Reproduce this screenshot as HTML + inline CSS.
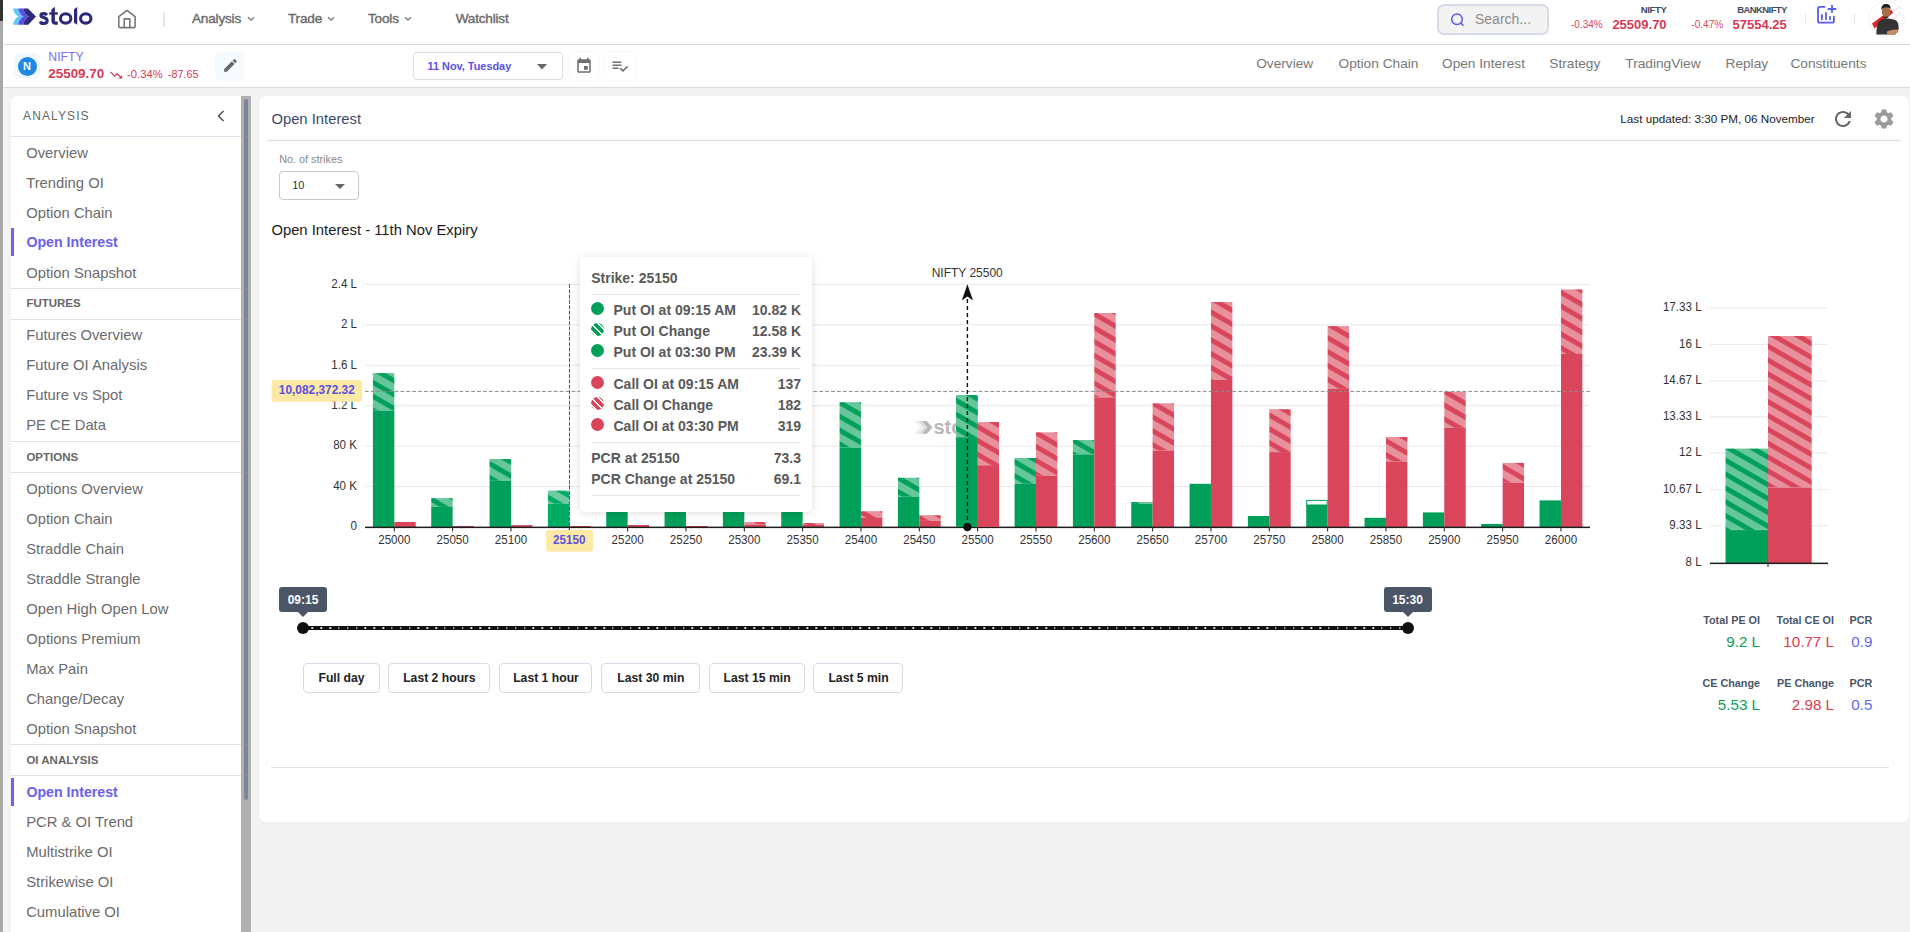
<!DOCTYPE html>
<html><head><meta charset="utf-8"><style>
html,body{margin:0;padding:0;}
body{width:1910px;height:932px;overflow:hidden;position:relative;background:#f3f3f3;font-family:"Liberation Sans",sans-serif;}
.t{position:absolute;white-space:nowrap;}
.r{position:absolute;}
</style></head><body>
<div class="r" style="left:0px;top:0px;width:3px;height:932px;background:#a9a9a9"></div>
<div class="r" style="left:0px;top:0px;width:3px;height:21px;background:#333"></div>
<div class="r" style="left:3px;top:0px;width:1907px;height:44px;background:#fff"></div>
<div class="r" style="left:3px;top:44px;width:1907px;height:1px;background:#dcdcdc"></div>
<div class="r" style="left:3px;top:45px;width:1907px;height:42px;background:#fff"></div>
<div class="r" style="left:3px;top:87px;width:1907px;height:1px;background:#dcdcdc"></div>
<svg class="r" style="left:0;top:0" width="40" height="32" viewBox="0 0 40 32">
<path d="M13 8.6L18.1 8.6Q19.3 14.6 23.6 16.6Q19.3 18.6 18.1 24.8L13 24.8Q14.2 18.6 18.5 16.6Q14.2 14.6 13 8.6Z" fill="#5ec8f8"/>
<path d="M18.1 8.6L23.4 8.6Q24.6 14.6 28.9 16.6Q24.6 18.6 23.4 24.8L18.1 24.8Q19.3 18.6 23.6 16.6Q19.3 14.6 18.1 8.6Z" fill="#5a50e8"/>
<path d="M23.4 8.6L27.9 8.6L36 16.6L28.3 24.8L23.4 24.8Q24.6 18.6 28.9 16.6Q24.6 14.6 23.4 8.6Z" fill="#2d2b7a"/>
</svg>
<svg class="r" style="left:0;top:0" width="100" height="32" viewBox="0 0 100 32">
<g fill="#2b2a78">
<path d="M51.4 9.3L54.9 7.1V20.4Q54.9 21.6 56.1 21.6H57.8V24.7H55.6Q51.4 24.7 51.4 20.5Z"/>
<rect x="49.2" y="12.3" width="8.6" height="2.3"/>
<path d="M74 9.3L77.2 7.1V24.7L74 22.8Z"/>
</g>
<g fill="none" stroke="#2b2a78" stroke-width="3.1">
<ellipse cx="65.65" cy="18.45" rx="5.2" ry="4.7"/>
<ellipse cx="85.75" cy="18.45" rx="5.2" ry="4.7"/>
<path d="M46.9 15.1C46.2 13.9 45 13.6 43.6 13.6C41.9 13.6 40.9 14.3 40.9 15.4C40.9 16.8 42.6 17.2 44.3 17.7C46.3 18.3 47.2 19.2 47.2 20.8C47.2 22.6 45.6 23.5 43.6 23.5C41.8 23.5 40.6 22.8 39.9 21.6"/>
</g></svg>
<svg class="r" style="left:117px;top:9px" width="20" height="20" viewBox="0 0 20 20" fill="none" stroke="#777" stroke-width="1.6" stroke-linejoin="round">
<path d="M1.8 7.6L10 1.4L18.1 7.6V17.6Q18.1 18.6 17.1 18.6H2.8Q1.8 18.6 1.8 17.6Z"/><path d="M7.2 18.6V9.9H12.8V18.6"/></svg>
<div class="r" style="left:163px;top:12px;width:2px;height:15px;background:#e3e5f2"></div>
<div class="t" style="left:192.00px;top:11.78px;font-size:13.6px;line-height:13.6px;color:#6b6b6b;font-weight:400;letter-spacing:-0.2px;-webkit-text-stroke:0.4px #6b6b6b;">Analysis</div>
<svg class="r" style="left:247px;top:16px" width="8" height="6" viewBox="0 0 8 6"><path d="M1 1.2L4 4.2L7 1.2" fill="none" stroke="#777" stroke-width="1.3"/></svg>
<div class="t" style="left:288.00px;top:11.78px;font-size:13.6px;line-height:13.6px;color:#6b6b6b;font-weight:400;letter-spacing:-0.2px;-webkit-text-stroke:0.4px #6b6b6b;">Trade</div>
<svg class="r" style="left:327px;top:16px" width="8" height="6" viewBox="0 0 8 6"><path d="M1 1.2L4 4.2L7 1.2" fill="none" stroke="#777" stroke-width="1.3"/></svg>
<div class="t" style="left:368.00px;top:11.78px;font-size:13.6px;line-height:13.6px;color:#6b6b6b;font-weight:400;letter-spacing:-0.2px;-webkit-text-stroke:0.4px #6b6b6b;">Tools</div>
<svg class="r" style="left:404px;top:16px" width="8" height="6" viewBox="0 0 8 6"><path d="M1 1.2L4 4.2L7 1.2" fill="none" stroke="#777" stroke-width="1.3"/></svg>
<div class="t" style="left:455.70px;top:11.78px;font-size:13.6px;line-height:13.6px;color:#6b6b6b;font-weight:400;letter-spacing:-0.2px;-webkit-text-stroke:0.4px #6b6b6b;">Watchlist</div>
<div class="r" style="left:1437px;top:4px;width:112px;height:31px;background:#f3f3f4;border:2px solid #d6dbe8;border-radius:7px;box-sizing:border-box"></div>
<svg class="r" style="left:1450px;top:12px" width="16" height="16" viewBox="0 0 16 16" fill="none" stroke="#5a5cf0" stroke-width="1.5"><circle cx="7" cy="7.2" r="5.3"/><path d="M10.9 11.1L13.6 13.8"/></svg>
<div class="t" style="left:1475.00px;top:11.95px;font-size:14px;line-height:14px;color:#8a8a8a;font-weight:400;">Search...</div>
<div class="t" style="right:243.40px;text-align:right;top:4.76px;font-size:9.5px;line-height:9.5px;color:#3d4a5c;font-weight:700;letter-spacing:-0.3px;">NIFTY</div>
<div class="t" style="right:307.30px;text-align:right;top:20.13px;font-size:10px;line-height:10px;color:#d9455f;font-weight:400;">-0.34%</div>
<div class="t" style="right:243.40px;text-align:right;top:17.69px;font-size:13px;line-height:13px;color:#d63a55;font-weight:700;">25509.70</div>
<div class="t" style="right:123.20px;text-align:right;top:4.76px;font-size:9.5px;line-height:9.5px;color:#3d4a5c;font-weight:700;letter-spacing:-0.6px;">BANKNIFTY</div>
<div class="t" style="right:186.90px;text-align:right;top:20.13px;font-size:10px;line-height:10px;color:#d9455f;font-weight:400;">-0.47%</div>
<div class="t" style="right:123.20px;text-align:right;top:17.69px;font-size:13px;line-height:13px;color:#d63a55;font-weight:700;">57554.25</div>
<div class="r" style="left:1805px;top:14px;width:1px;height:10px;background:#e6e6ee"></div>
<svg class="r" style="left:1815px;top:3px" width="24" height="24" viewBox="0 0 24 24" fill="none" stroke="#5a5cf0" stroke-width="1.8" stroke-linecap="round"><path d="M9.5 3.9H4.8Q3 3.9 3 5.7V17.9Q3 19.7 4.8 19.7H17.1Q18.9 19.7 18.9 17.9V13.6"/><path d="M6.9 12V16.3M11 9.9V16.3M14.9 13.8V16.3"/><path d="M17 2.6V9.2M13.5 6H20.6"/></svg>
<div class="r" style="left:1854px;top:14px;width:1px;height:10px;background:#e6e6ee"></div>
<svg class="r" style="left:1865px;top:0px" width="45" height="40" viewBox="0 0 45 40">
<circle cx="21.5" cy="19" r="17.5" fill="#fff" stroke="#f1f1f1" stroke-width="1"/>
<path d="M24 13L35.5 7M28 19L36 12.5" stroke="#f4c4c4" stroke-width="0.8" fill="none"/>
<path d="M7 23.5L26 9.5L28 12.8L9.5 28.5Z" fill="#e0262b"/>
<path d="M11.5 34.5C11.5 27 12 22.5 15 20.5C17 19 19.5 18.5 21.5 18.5C24 18.5 28 19 31 20.5C33.5 22 34 27 33.5 30L30 34.5Z" fill="#333"/>
<path d="M22 31.5C25 30 29.5 29.5 33 29.5L33 32.5L28 34.5L22 34.5Z" fill="#c98d62"/>
<ellipse cx="21" cy="11.8" rx="4.2" ry="5.6" fill="#a8704a"/>
<path d="M16.5 10C16 5 19 4 21 4C24 4 26 5.5 25.5 9.5L24.5 8C22 7 19.5 7 17.5 8.5Z" fill="#1e1e1e"/>
<path d="M18.5 16C19.5 17 22.5 17 23.5 16L23 17.5C22 18.2 20 18.2 19 17.5Z" fill="#2a2a2a"/>
</svg>
<div class="r" style="left:14px;top:53px;width:26px;height:26px;background:#f3f8fe;border-radius:5px"></div>
<div class="r" style="left:17.5px;top:56.5px;width:19px;height:19px;background:#1e88e5;border-radius:50%"></div>
<div class="t" style="left:-273.00px;width:600px;text-align:center;top:60.99px;font-size:11px;line-height:11px;color:#fff;font-weight:700;">N</div>
<div class="t" style="left:48.30px;top:50.59px;font-size:12.3px;line-height:12.3px;color:#7b6ef0;font-weight:400;">NIFTY</div>
<div class="t" style="left:48.30px;top:67.25px;font-size:13.4px;line-height:13.4px;color:#d63a55;font-weight:700;">25509.70</div>
<svg class="r" style="left:108.8px;top:67.8px" width="14.4" height="14.4" viewBox="0 0 24 24"><path fill="#d63a55" d="M16 18l2.29-2.29-4.88-4.88-4 4L2 7.41 3.41 6l6 6 4-4 6.3 6.29L22 12v6z"/></svg>
<div class="t" style="left:127.00px;top:69.03px;font-size:11.3px;line-height:11.3px;color:#d63a55;font-weight:400;">-0.34%</div>
<div class="t" style="left:167.90px;top:69.46px;font-size:10.8px;line-height:10.8px;color:#d63a55;font-weight:400;">-87.65</div>
<div class="r" style="left:216px;top:53px;width:27px;height:27px;background:#f5faff;border-radius:5px;box-shadow:0 0 3px rgba(0,0,0,0.06)"></div>
<svg class="r" style="left:221.6px;top:57.4px" width="16.9" height="16.9" viewBox="0 0 24 24"><path fill="#666" d="M3 17.25V21h3.75L17.81 9.94l-3.75-3.75L3 17.25zM20.71 7.04c.39-.39.39-1.02 0-1.41l-2.34-2.34c-.39-.39-1.02-.39-1.41 0l-1.83 1.83 3.75 3.75 1.83-1.83z"/></svg>
<div class="r" style="left:413px;top:52px;width:150px;height:28px;border:1px solid #dddddd;border-radius:4px;box-sizing:border-box;background:#fff"></div>
<div class="t" style="left:427.50px;top:60.97px;font-size:10.9px;line-height:10.9px;color:#5b50e8;font-weight:700;">11 Nov, Tuesday</div>
<svg class="r" style="left:537px;top:63.5px" width="10" height="6" viewBox="0 0 10 6"><path d="M0 0H10L5 5.5Z" fill="#666"/></svg>
<div class="r" style="left:569px;top:52px;width:30px;height:28px;background:#fff;border-radius:5px;box-shadow:0 0 3px rgba(0,0,0,0.07)"></div>
<svg class="r" style="left:575px;top:56.6px" width="18" height="18" viewBox="0 0 24 24"><path fill="#6e6e6e" d="M17 12h-5v5h5v-5zM16 1v2H8V1H6v2H5c-1.11 0-1.99.9-1.99 2L3 19c0 1.1.89 2 2 2h14c1.1 0 2-.9 2-2V5c0-1.1-.9-2-2-2h-1V1h-2zm3 18H5V8h14v11z"/></svg>
<div class="r" style="left:605px;top:52px;width:30px;height:28px;background:#fff;border-radius:5px;box-shadow:0 0 3px rgba(0,0,0,0.07)"></div>
<svg class="r" style="left:610.8px;top:56.6px" width="18" height="18" viewBox="0 0 24 24"><path fill="#6e6e6e" d="M14 10H2v2h12v-2zm0-4H2v2h12V6zM2 16h8v-2H2v2zm19.5-4.5L23 13l-6.99 7-4.51-4.5L13 14l3.01 3 5.49-5.5z"/></svg>
<div class="t" style="left:1256.20px;top:57.10px;font-size:13.7px;line-height:13.7px;color:#777;font-weight:400;">Overview</div>
<div class="t" style="left:1338.50px;top:57.10px;font-size:13.7px;line-height:13.7px;color:#777;font-weight:400;">Option Chain</div>
<div class="t" style="left:1442.00px;top:57.10px;font-size:13.7px;line-height:13.7px;color:#777;font-weight:400;">Open Interest</div>
<div class="t" style="left:1549.30px;top:57.10px;font-size:13.7px;line-height:13.7px;color:#777;font-weight:400;">Strategy</div>
<div class="t" style="left:1625.30px;top:57.10px;font-size:13.7px;line-height:13.7px;color:#777;font-weight:400;">TradingView</div>
<div class="t" style="left:1725.50px;top:57.10px;font-size:13.7px;line-height:13.7px;color:#777;font-weight:400;">Replay</div>
<div class="t" style="left:1790.40px;top:57.10px;font-size:13.7px;line-height:13.7px;color:#777;font-weight:400;">Constituents</div>
<div class="r" style="left:11px;top:96px;width:230px;height:836px;background:#fff;border-radius:6px 0 0 0"></div>
<div class="r" style="left:241px;top:96px;width:10px;height:836px;background:#b0b0b0"></div>
<div class="r" style="left:244px;top:99px;width:4px;height:701px;background:#7b8799;border-radius:2px"></div>
<div class="t" style="left:23.10px;top:109.84px;font-size:12px;line-height:12px;color:#666;font-weight:400;letter-spacing:1.1px;">ANALYSIS</div>
<svg class="r" style="left:216px;top:110px" width="10" height="12" viewBox="0 0 10 12"><path d="M7.5 1L2.5 6L7.5 11" fill="none" stroke="#555" stroke-width="1.6"/></svg>
<div class="r" style="left:11px;top:136px;width:230px;height:1px;background:#e0e2f0"></div>
<div class="t" style="left:26.20px;top:145.97px;font-size:14.8px;line-height:14.8px;color:#6b6b6b;font-weight:400;">Overview</div>
<div class="t" style="left:26.20px;top:175.97px;font-size:14.8px;line-height:14.8px;color:#6b6b6b;font-weight:400;">Trending OI</div>
<div class="t" style="left:26.20px;top:205.97px;font-size:14.8px;line-height:14.8px;color:#6b6b6b;font-weight:400;">Option Chain</div>
<div class="r" style="left:11px;top:228px;width:3px;height:28px;background:#6c63f0"></div>
<div class="t" style="left:26.40px;top:235.48px;font-size:14.2px;line-height:14.2px;color:#6b5ff0;font-weight:700;">Open Interest</div>
<div class="t" style="left:26.20px;top:265.97px;font-size:14.8px;line-height:14.8px;color:#6b6b6b;font-weight:400;">Option Snapshot</div>
<div class="r" style="left:11px;top:288px;width:230px;height:1px;background:#dfe2ec"></div>
<div class="t" style="left:26.40px;top:298.46px;font-size:11.5px;line-height:11.5px;color:#666;font-weight:700;">FUTURES</div>
<div class="r" style="left:11px;top:319px;width:230px;height:1px;background:#dfe2ec"></div>
<div class="t" style="left:26.20px;top:328.47px;font-size:14.8px;line-height:14.8px;color:#6b6b6b;font-weight:400;">Futures Overview</div>
<div class="t" style="left:26.20px;top:358.47px;font-size:14.8px;line-height:14.8px;color:#6b6b6b;font-weight:400;">Future OI Analysis</div>
<div class="t" style="left:26.20px;top:388.47px;font-size:14.8px;line-height:14.8px;color:#6b6b6b;font-weight:400;">Future vs Spot</div>
<div class="t" style="left:26.20px;top:418.47px;font-size:14.8px;line-height:14.8px;color:#6b6b6b;font-weight:400;">PE CE Data</div>
<div class="r" style="left:11px;top:441px;width:230px;height:1px;background:#dfe2ec"></div>
<div class="t" style="left:26.40px;top:451.76px;font-size:11.5px;line-height:11.5px;color:#666;font-weight:700;">OPTIONS</div>
<div class="r" style="left:11px;top:472px;width:230px;height:1px;background:#dfe2ec"></div>
<div class="t" style="left:26.20px;top:481.77px;font-size:14.8px;line-height:14.8px;color:#6b6b6b;font-weight:400;">Options Overview</div>
<div class="t" style="left:26.20px;top:511.77px;font-size:14.8px;line-height:14.8px;color:#6b6b6b;font-weight:400;">Option Chain</div>
<div class="t" style="left:26.20px;top:541.77px;font-size:14.8px;line-height:14.8px;color:#6b6b6b;font-weight:400;">Straddle Chain</div>
<div class="t" style="left:26.20px;top:571.77px;font-size:14.8px;line-height:14.8px;color:#6b6b6b;font-weight:400;">Straddle Strangle</div>
<div class="t" style="left:26.20px;top:601.77px;font-size:14.8px;line-height:14.8px;color:#6b6b6b;font-weight:400;">Open High Open Low</div>
<div class="t" style="left:26.20px;top:631.77px;font-size:14.8px;line-height:14.8px;color:#6b6b6b;font-weight:400;">Options Premium</div>
<div class="t" style="left:26.20px;top:661.77px;font-size:14.8px;line-height:14.8px;color:#6b6b6b;font-weight:400;">Max Pain</div>
<div class="t" style="left:26.20px;top:691.77px;font-size:14.8px;line-height:14.8px;color:#6b6b6b;font-weight:400;">Change/Decay</div>
<div class="t" style="left:26.20px;top:721.77px;font-size:14.8px;line-height:14.8px;color:#6b6b6b;font-weight:400;">Option Snapshot</div>
<div class="r" style="left:11px;top:744px;width:230px;height:1px;background:#dfe2ec"></div>
<div class="t" style="left:26.40px;top:754.86px;font-size:11.5px;line-height:11.5px;color:#666;font-weight:700;">OI ANALYSIS</div>
<div class="r" style="left:11px;top:775px;width:230px;height:1px;background:#dfe2ec"></div>
<div class="r" style="left:11px;top:778px;width:3px;height:28px;background:#6c63f0"></div>
<div class="t" style="left:26.40px;top:784.58px;font-size:14.2px;line-height:14.2px;color:#6b5ff0;font-weight:700;">Open Interest</div>
<div class="t" style="left:26.20px;top:815.07px;font-size:14.8px;line-height:14.8px;color:#6b6b6b;font-weight:400;">PCR & OI Trend</div>
<div class="t" style="left:26.20px;top:845.07px;font-size:14.8px;line-height:14.8px;color:#6b6b6b;font-weight:400;">Multistrike OI</div>
<div class="t" style="left:26.20px;top:875.07px;font-size:14.8px;line-height:14.8px;color:#6b6b6b;font-weight:400;">Strikewise OI</div>
<div class="t" style="left:26.20px;top:905.07px;font-size:14.8px;line-height:14.8px;color:#6b6b6b;font-weight:400;">Cumulative OI</div>
<div class="r" style="left:259px;top:96px;width:1650px;height:726px;background:#fff;border-radius:6px;box-shadow:0 0 2px rgba(0,0,0,0.05)"></div>
<div class="t" style="left:271.40px;top:112.07px;font-size:14.8px;line-height:14.8px;color:#3b4a68;font-weight:400;">Open Interest</div>
<div class="t" style="right:95.40px;text-align:right;top:113.09px;font-size:11.7px;line-height:11.7px;color:#222;font-weight:400;">Last updated: 3:30 PM, 06 November</div>
<svg class="r" style="left:1831px;top:107px" width="24" height="24" viewBox="0 0 24 24"><path fill="#666" d="M17.65 6.35C16.2 4.9 14.21 4 12 4c-4.42 0-7.99 3.58-7.99 8s3.57 8 7.99 8c3.73 0 6.84-2.55 7.73-6h-2.08c-.82 2.33-3.04 4-5.65 4-3.31 0-6-2.69-6-6s2.69-6 6-6c1.66 0 3.14.69 4.22 1.78L13 11h7V4l-2.35 2.35z"/></svg>
<svg class="r" style="left:1872px;top:107px" width="24" height="24" viewBox="0 0 24 24"><path fill="#9a9a9a" d="M19.14 12.94c.04-.3.06-.61.06-.94 0-.32-.02-.64-.07-.94l2.03-1.58a.49.49 0 0 0 .12-.61l-1.92-3.32a.488.488 0 0 0-.59-.22l-2.39.96c-.5-.38-1.03-.7-1.62-.94l-.36-2.54a.484.484 0 0 0-.48-.41h-3.84c-.24 0-.43.17-.47.41l-.36 2.54c-.59.24-1.13.57-1.62.94l-2.39-.96c-.22-.08-.47 0-.59.22L2.74 8.87c-.12.21-.08.47.12.61l2.03 1.58c-.05.3-.09.63-.09.94s.02.64.07.94l-2.03 1.58a.49.49 0 0 0-.12.61l1.92 3.32c.12.22.37.29.59.22l2.39-.96c.5.38 1.03.7 1.62.94l.36 2.54c.05.24.24.41.48.41h3.84c.24 0 .44-.17.47-.41l.36-2.54c.59-.24 1.13-.56 1.62-.94l2.39.96c.22.08.47 0 .59-.22l1.92-3.32c.12-.22.07-.47-.12-.61l-2.01-1.58zM12 15.6c-1.98 0-3.6-1.62-3.6-3.6s1.62-3.6 3.6-3.6 3.6 1.62 3.6 3.6-1.62 3.6-3.6 3.6z"/></svg>
<div class="r" style="left:267px;top:140px;width:1634px;height:1px;background:#dddddd"></div>
<div class="t" style="left:279.30px;top:154.06px;font-size:10.8px;line-height:10.8px;color:#888;font-weight:400;">No. of strikes</div>
<div class="r" style="left:279px;top:171px;width:80px;height:29px;border:1px solid #c8c8c8;border-radius:4px;box-sizing:border-box"></div>
<div class="t" style="left:292.20px;top:180.49px;font-size:11px;line-height:11px;color:#333;font-weight:400;">10</div>
<svg class="r" style="left:335px;top:184px" width="10" height="5" viewBox="0 0 10 5"><path d="M0 0H10L5 5Z" fill="#666"/></svg>
<div class="t" style="left:271.40px;top:223.17px;font-size:14.8px;line-height:14.8px;color:#1a1a1a;font-weight:400;">Open Interest - 11th Nov Expiry</div>
<svg class="r" style="left:0;top:0" width="1910" height="932" viewBox="0 0 1910 932">
<defs><pattern id="pg" patternUnits="userSpaceOnUse" width="12" height="12" patternTransform="rotate(30) translate(0,10.3)"><rect width="12" height="12" fill="#66c69c"/><rect y="0" width="12" height="4.9" fill="#00a05a"/></pattern><pattern id="pgh" patternUnits="userSpaceOnUse" width="12" height="12" patternTransform="rotate(30) translate(0,10.3)"><rect width="12" height="12" fill="#6fcca2"/><rect y="0" width="12" height="4.9" fill="#00ab63"/></pattern><pattern id="pr" patternUnits="userSpaceOnUse" width="12" height="12" patternTransform="rotate(30) translate(0,10.3)"><rect width="12" height="12" fill="#e8909c"/><rect y="0" width="12" height="4.9" fill="#d9465b"/></pattern><pattern id="pg2" patternUnits="userSpaceOnUse" width="12" height="12" patternTransform="rotate(30) translate(0,1.4)"><rect width="12" height="12" fill="#66c69c"/><rect y="0" width="12" height="4.9" fill="#00a05a"/></pattern><pattern id="pr2" patternUnits="userSpaceOnUse" width="12" height="12" patternTransform="rotate(30) translate(0,1.4)"><rect width="12" height="12" fill="#e8909c"/><rect y="0" width="12" height="4.9" fill="#d9465b"/></pattern></defs>
<rect x="365" y="486.07" width="1225" height="1" fill="#e8e8e8"/>
<rect x="365" y="445.64" width="1225" height="1" fill="#e8e8e8"/>
<rect x="365" y="405.21" width="1225" height="1" fill="#e8e8e8"/>
<rect x="365" y="364.78" width="1225" height="1" fill="#e8e8e8"/>
<rect x="365" y="324.35" width="1225" height="1" fill="#e8e8e8"/>
<rect x="365" y="283.92" width="1225" height="1" fill="#e8e8e8"/>
<text transform="translate(357.00,530.30) scale(1,1.09)" font-size="11.6" fill="#333" text-anchor="end" font-weight="400">0</text>
<text transform="translate(357.00,489.87) scale(1,1.09)" font-size="11.6" fill="#333" text-anchor="end" font-weight="400">40 K</text>
<text transform="translate(357.00,449.44) scale(1,1.09)" font-size="11.6" fill="#333" text-anchor="end" font-weight="400">80 K</text>
<text transform="translate(357.00,409.01) scale(1,1.09)" font-size="11.6" fill="#333" text-anchor="end" font-weight="400">1.2 L</text>
<text transform="translate(357.00,368.58) scale(1,1.09)" font-size="11.6" fill="#333" text-anchor="end" font-weight="400">1.6 L</text>
<text transform="translate(357.00,328.15) scale(1,1.09)" font-size="11.6" fill="#333" text-anchor="end" font-weight="400">2 L</text>
<text transform="translate(357.00,287.72) scale(1,1.09)" font-size="11.6" fill="#333" text-anchor="end" font-weight="400">2.4 L</text>
<rect x="372.90" y="373.10" width="21.40" height="37.60" fill="url(#pg)"/>
<rect x="372.90" y="410.70" width="21.40" height="116.30" fill="#00a05a"/>
<rect x="394.30" y="522.00" width="21.40" height="5.00" fill="#d9465b"/>
<rect x="431.23" y="498.10" width="21.40" height="8.80" fill="url(#pg)"/>
<rect x="431.23" y="506.90" width="21.40" height="20.10" fill="#00a05a"/>
<rect x="452.63" y="526.00" width="21.40" height="1.00" fill="#d9465b"/>
<rect x="489.57" y="459.00" width="21.40" height="21.80" fill="url(#pg)"/>
<rect x="489.57" y="480.80" width="21.40" height="46.20" fill="#00a05a"/>
<rect x="510.97" y="525.10" width="21.40" height="1.90" fill="#d9465b"/>
<rect x="547.90" y="490.60" width="21.40" height="13.20" fill="url(#pgh)"/>
<rect x="547.90" y="503.80" width="21.40" height="23.20" fill="#00ab63"/>
<rect x="569.30" y="526.00" width="21.40" height="1.00" fill="#d9465b"/>
<rect x="606.23" y="470.00" width="21.40" height="20.00" fill="url(#pg)"/>
<rect x="606.23" y="490.00" width="21.40" height="37.00" fill="#00a05a"/>
<rect x="627.63" y="525.00" width="21.40" height="2.00" fill="#d9465b"/>
<rect x="664.56" y="480.00" width="21.40" height="15.00" fill="url(#pg)"/>
<rect x="664.56" y="495.00" width="21.40" height="32.00" fill="#00a05a"/>
<rect x="685.96" y="526.00" width="21.40" height="1.00" fill="#d9465b"/>
<rect x="722.90" y="470.00" width="21.40" height="20.00" fill="url(#pg)"/>
<rect x="722.90" y="490.00" width="21.40" height="37.00" fill="#00a05a"/>
<rect x="744.30" y="522.00" width="21.40" height="2.50" fill="url(#pr)"/>
<rect x="744.30" y="524.50" width="21.40" height="2.50" fill="#d9465b"/>
<rect x="781.23" y="480.00" width="21.40" height="15.00" fill="url(#pg)"/>
<rect x="781.23" y="495.00" width="21.40" height="32.00" fill="#00a05a"/>
<rect x="802.63" y="523.00" width="21.40" height="2.00" fill="url(#pr)"/>
<rect x="802.63" y="525.00" width="21.40" height="2.00" fill="#d9465b"/>
<rect x="839.56" y="402.20" width="21.40" height="45.40" fill="url(#pg)"/>
<rect x="839.56" y="447.60" width="21.40" height="79.40" fill="#00a05a"/>
<rect x="860.96" y="511.20" width="21.40" height="6.80" fill="url(#pr)"/>
<rect x="860.96" y="518.00" width="21.40" height="9.00" fill="#d9465b"/>
<rect x="897.90" y="477.70" width="21.40" height="19.00" fill="url(#pg)"/>
<rect x="897.90" y="496.70" width="21.40" height="30.30" fill="#00a05a"/>
<rect x="919.30" y="515.20" width="21.40" height="5.70" fill="url(#pr)"/>
<rect x="919.30" y="520.90" width="21.40" height="6.10" fill="#d9465b"/>
<rect x="956.23" y="395.00" width="21.40" height="42.50" fill="url(#pg)"/>
<rect x="956.23" y="437.50" width="21.40" height="89.50" fill="#00a05a"/>
<rect x="977.63" y="422.20" width="21.40" height="43.40" fill="url(#pr)"/>
<rect x="977.63" y="465.60" width="21.40" height="61.40" fill="#d9465b"/>
<rect x="1014.56" y="458.00" width="21.40" height="25.80" fill="url(#pg)"/>
<rect x="1014.56" y="483.80" width="21.40" height="43.20" fill="#00a05a"/>
<rect x="1035.96" y="432.30" width="21.40" height="43.50" fill="url(#pr)"/>
<rect x="1035.96" y="475.80" width="21.40" height="51.20" fill="#d9465b"/>
<rect x="1072.90" y="440.00" width="21.40" height="14.40" fill="url(#pg)"/>
<rect x="1072.90" y="454.40" width="21.40" height="72.60" fill="#00a05a"/>
<rect x="1094.30" y="313.00" width="21.40" height="84.40" fill="url(#pr)"/>
<rect x="1094.30" y="397.40" width="21.40" height="129.60" fill="#d9465b"/>
<rect x="1131.23" y="502.00" width="21.40" height="1.90" fill="url(#pg)"/>
<rect x="1131.23" y="503.90" width="21.40" height="23.10" fill="#00a05a"/>
<rect x="1152.63" y="403.30" width="21.40" height="47.20" fill="url(#pr)"/>
<rect x="1152.63" y="450.50" width="21.40" height="76.50" fill="#d9465b"/>
<rect x="1189.56" y="483.80" width="21.40" height="43.20" fill="#00a05a"/>
<rect x="1210.96" y="302.00" width="21.40" height="78.00" fill="url(#pr)"/>
<rect x="1210.96" y="380.00" width="21.40" height="147.00" fill="#d9465b"/>
<rect x="1247.89" y="516.00" width="21.40" height="11.00" fill="#00a05a"/>
<rect x="1269.30" y="409.20" width="21.40" height="42.90" fill="url(#pr)"/>
<rect x="1269.30" y="452.10" width="21.40" height="74.90" fill="#d9465b"/>
<rect x="1306.73" y="500.40" width="20.40" height="4.80" fill="#fff" stroke="#00a05a" stroke-width="1"/>
<rect x="1306.23" y="504.70" width="21.40" height="22.30" fill="#00a05a"/>
<rect x="1327.63" y="326.10" width="21.40" height="62.80" fill="url(#pr)"/>
<rect x="1327.63" y="388.90" width="21.40" height="138.10" fill="#d9465b"/>
<rect x="1364.56" y="517.80" width="21.40" height="9.20" fill="#00a05a"/>
<rect x="1385.96" y="437.00" width="21.40" height="24.50" fill="url(#pr)"/>
<rect x="1385.96" y="461.50" width="21.40" height="65.50" fill="#d9465b"/>
<rect x="1422.89" y="512.40" width="21.40" height="14.60" fill="#00a05a"/>
<rect x="1444.29" y="391.80" width="21.40" height="36.10" fill="url(#pr)"/>
<rect x="1444.29" y="427.90" width="21.40" height="99.10" fill="#d9465b"/>
<rect x="1481.23" y="524.00" width="21.40" height="3.00" fill="#00a05a"/>
<rect x="1502.63" y="462.90" width="21.40" height="19.90" fill="url(#pr)"/>
<rect x="1502.63" y="482.80" width="21.40" height="44.20" fill="#d9465b"/>
<rect x="1539.56" y="500.40" width="21.40" height="26.60" fill="#00a05a"/>
<rect x="1560.96" y="289.40" width="21.40" height="64.60" fill="url(#pr)"/>
<rect x="1560.96" y="354.00" width="21.40" height="173.00" fill="#d9465b"/>
<rect x="365" y="526.6" width="1225" height="1.5" fill="#1e1e1e"/>
<rect x="393.80" y="527" width="1" height="4.5" fill="#1e1e1e"/>
<rect x="452.13" y="527" width="1" height="4.5" fill="#1e1e1e"/>
<rect x="510.47" y="527" width="1" height="4.5" fill="#1e1e1e"/>
<rect x="568.80" y="527" width="1" height="4.5" fill="#1e1e1e"/>
<rect x="627.13" y="527" width="1" height="4.5" fill="#1e1e1e"/>
<rect x="685.46" y="527" width="1" height="4.5" fill="#1e1e1e"/>
<rect x="743.80" y="527" width="1" height="4.5" fill="#1e1e1e"/>
<rect x="802.13" y="527" width="1" height="4.5" fill="#1e1e1e"/>
<rect x="860.46" y="527" width="1" height="4.5" fill="#1e1e1e"/>
<rect x="918.80" y="527" width="1" height="4.5" fill="#1e1e1e"/>
<rect x="977.13" y="527" width="1" height="4.5" fill="#1e1e1e"/>
<rect x="1035.46" y="527" width="1" height="4.5" fill="#1e1e1e"/>
<rect x="1093.80" y="527" width="1" height="4.5" fill="#1e1e1e"/>
<rect x="1152.13" y="527" width="1" height="4.5" fill="#1e1e1e"/>
<rect x="1210.46" y="527" width="1" height="4.5" fill="#1e1e1e"/>
<rect x="1268.80" y="527" width="1" height="4.5" fill="#1e1e1e"/>
<rect x="1327.13" y="527" width="1" height="4.5" fill="#1e1e1e"/>
<rect x="1385.46" y="527" width="1" height="4.5" fill="#1e1e1e"/>
<rect x="1443.79" y="527" width="1" height="4.5" fill="#1e1e1e"/>
<rect x="1502.13" y="527" width="1" height="4.5" fill="#1e1e1e"/>
<rect x="1560.46" y="527" width="1" height="4.5" fill="#1e1e1e"/>
<text transform="translate(394.30,543.80) scale(1,1.09)" font-size="11.6" fill="#333" text-anchor="middle" font-weight="400">25000</text>
<text transform="translate(452.63,543.80) scale(1,1.09)" font-size="11.6" fill="#333" text-anchor="middle" font-weight="400">25050</text>
<text transform="translate(510.97,543.80) scale(1,1.09)" font-size="11.6" fill="#333" text-anchor="middle" font-weight="400">25100</text>
<rect x="546" y="530" width="47" height="21.8" rx="3" fill="#fde9a6"/>
<text transform="translate(569.30,544.10) scale(1,1.11)" font-size="11.7" fill="#5b4fe0" text-anchor="middle" font-weight="700">25150</text>
<text transform="translate(627.63,543.80) scale(1,1.09)" font-size="11.6" fill="#333" text-anchor="middle" font-weight="400">25200</text>
<text transform="translate(685.96,543.80) scale(1,1.09)" font-size="11.6" fill="#333" text-anchor="middle" font-weight="400">25250</text>
<text transform="translate(744.30,543.80) scale(1,1.09)" font-size="11.6" fill="#333" text-anchor="middle" font-weight="400">25300</text>
<text transform="translate(802.63,543.80) scale(1,1.09)" font-size="11.6" fill="#333" text-anchor="middle" font-weight="400">25350</text>
<text transform="translate(860.96,543.80) scale(1,1.09)" font-size="11.6" fill="#333" text-anchor="middle" font-weight="400">25400</text>
<text transform="translate(919.30,543.80) scale(1,1.09)" font-size="11.6" fill="#333" text-anchor="middle" font-weight="400">25450</text>
<text transform="translate(977.63,543.80) scale(1,1.09)" font-size="11.6" fill="#333" text-anchor="middle" font-weight="400">25500</text>
<text transform="translate(1035.96,543.80) scale(1,1.09)" font-size="11.6" fill="#333" text-anchor="middle" font-weight="400">25550</text>
<text transform="translate(1094.30,543.80) scale(1,1.09)" font-size="11.6" fill="#333" text-anchor="middle" font-weight="400">25600</text>
<text transform="translate(1152.63,543.80) scale(1,1.09)" font-size="11.6" fill="#333" text-anchor="middle" font-weight="400">25650</text>
<text transform="translate(1210.96,543.80) scale(1,1.09)" font-size="11.6" fill="#333" text-anchor="middle" font-weight="400">25700</text>
<text transform="translate(1269.30,543.80) scale(1,1.09)" font-size="11.6" fill="#333" text-anchor="middle" font-weight="400">25750</text>
<text transform="translate(1327.63,543.80) scale(1,1.09)" font-size="11.6" fill="#333" text-anchor="middle" font-weight="400">25800</text>
<text transform="translate(1385.96,543.80) scale(1,1.09)" font-size="11.6" fill="#333" text-anchor="middle" font-weight="400">25850</text>
<text transform="translate(1444.29,543.80) scale(1,1.09)" font-size="11.6" fill="#333" text-anchor="middle" font-weight="400">25900</text>
<text transform="translate(1502.63,543.80) scale(1,1.09)" font-size="11.6" fill="#333" text-anchor="middle" font-weight="400">25950</text>
<text transform="translate(1560.96,543.80) scale(1,1.09)" font-size="11.6" fill="#333" text-anchor="middle" font-weight="400">26000</text>
<g transform="translate(914,421)" opacity="1">
<path d="M0 0h5l6.5 6.4l-6.5 6.4h-5l6.5-6.4z" fill="#f0f0f0"/>
<path d="M4 0h5l6.5 6.4l-6.5 6.4h-5l6.5-6.4z" fill="#dcdcdc"/>
<path d="M8 0h4.8l5.7 6.4l-5.7 6.4h-4.8l5.7-6.4z" fill="#b8b8b8"/>
</g>
<text transform="translate(933.50,433.70) scale(1,1.0)" font-size="20" fill="#b8b8b8" text-anchor="start" font-weight="700">stolo</text>
<rect x="956.23" y="395.00" width="21.40" height="42.50" fill="url(#pg)"/>
<rect x="956.23" y="437.50" width="21.40" height="89.50" fill="#00a05a"/>
<rect x="977.63" y="422.20" width="21.40" height="43.40" fill="url(#pr)"/>
<rect x="977.63" y="465.60" width="21.40" height="61.40" fill="#d9465b"/>
<line x1="365" y1="391.4" x2="1590" y2="391.4" stroke="#8a8a8a" stroke-width="1" stroke-dasharray="3.8,2.1"/>
<line x1="569.5" y1="284" x2="569.5" y2="527" stroke="#5a5a6a" stroke-width="1" stroke-dasharray="4,1.3"/>
<rect x="271.6" y="380.1" width="90.6" height="21.7" rx="3" fill="#fde9a6"/>
<text transform="translate(278.80,393.90) scale(1,1.05)" font-size="11.9" fill="#5b4fe0" text-anchor="start" font-weight="700">10,082,372.32</text>
<line x1="967.4" y1="292" x2="967.4" y2="527" stroke="#111" stroke-width="1.4" stroke-dasharray="4,3"/>
<path d="M967.4 284.2L973 300.6L967.4 296.5L961.8 300.6Z" fill="#111"/>
<circle cx="967.4" cy="527" r="4.2" fill="#111"/>
<text transform="translate(967.20,277.00) scale(1,1.09)" font-size="12" fill="#333" text-anchor="middle" font-weight="400">NIFTY 25500</text>
<text transform="translate(1701.60,566.40) scale(1,1.09)" font-size="11.6" fill="#333" text-anchor="end" font-weight="400">8 L</text>
<rect x="1710" y="525.30" width="118" height="1" fill="#e8e8e8"/>
<text transform="translate(1701.60,529.10) scale(1,1.09)" font-size="11.6" fill="#333" text-anchor="end" font-weight="400">9.33 L</text>
<rect x="1710" y="489.20" width="118" height="1" fill="#e8e8e8"/>
<text transform="translate(1701.60,493.00) scale(1,1.09)" font-size="11.6" fill="#333" text-anchor="end" font-weight="400">10.67 L</text>
<rect x="1710" y="452.50" width="118" height="1" fill="#e8e8e8"/>
<text transform="translate(1701.60,456.30) scale(1,1.09)" font-size="11.6" fill="#333" text-anchor="end" font-weight="400">12 L</text>
<rect x="1710" y="416.40" width="118" height="1" fill="#e8e8e8"/>
<text transform="translate(1701.60,420.20) scale(1,1.09)" font-size="11.6" fill="#333" text-anchor="end" font-weight="400">13.33 L</text>
<rect x="1710" y="380.60" width="118" height="1" fill="#e8e8e8"/>
<text transform="translate(1701.60,384.40) scale(1,1.09)" font-size="11.6" fill="#333" text-anchor="end" font-weight="400">14.67 L</text>
<rect x="1710" y="343.90" width="118" height="1" fill="#e8e8e8"/>
<text transform="translate(1701.60,347.70) scale(1,1.09)" font-size="11.6" fill="#333" text-anchor="end" font-weight="400">16 L</text>
<rect x="1710" y="307.50" width="118" height="1" fill="#e8e8e8"/>
<text transform="translate(1701.60,311.30) scale(1,1.09)" font-size="11.6" fill="#333" text-anchor="end" font-weight="400">17.33 L</text>
<rect x="1725.50" y="448.60" width="42.50" height="81.50" fill="url(#pg2)"/>
<rect x="1725.50" y="530.10" width="42.50" height="33.00" fill="#00a05a"/>
<rect x="1768.00" y="336.00" width="43.70" height="151.50" fill="url(#pr2)"/>
<rect x="1768.00" y="487.50" width="43.70" height="75.60" fill="#d9465b"/>
<rect x="1710" y="562.6" width="118" height="1.5" fill="#1e1e1e"/>
<rect x="1767.5" y="563" width="1" height="4" fill="#1e1e1e"/>
</svg>
<div class="r" style="left:580px;top:257px;width:232px;height:255px;background:#fff;border-radius:5px;box-shadow:0 1px 8px rgba(0,0,0,0.13)"></div>
<div class="t" style="left:591.20px;top:271.35px;font-size:14px;line-height:14px;color:#595959;font-weight:700;">Strike: 25150</div>
<div class="r" style="left:591px;top:294px;width:210px;height:1px;background:#e6e6e6"></div>
<div class="r" style="left:591px;top:301.9px;width:13px;height:13px;background:#00a05a;border-radius:50%"></div>
<div class="t" style="left:613.50px;top:303.05px;font-size:14px;line-height:14px;color:#595959;font-weight:700;">Put OI at 09:15 AM</div>
<div class="t" style="right:1109.00px;text-align:right;top:303.05px;font-size:14px;line-height:14px;color:#595959;font-weight:700;">10.82 K</div>
<div class="r" style="left:591px;top:322.8px;width:13px;height:13px;border-radius:50%;background:repeating-linear-gradient(45deg,#00a05a 0,#00a05a 3.2px,#fff 3.2px,#fff 4.8px)"></div>
<div class="t" style="left:613.50px;top:323.95px;font-size:14px;line-height:14px;color:#595959;font-weight:700;">Put OI Change</div>
<div class="t" style="right:1109.00px;text-align:right;top:323.95px;font-size:14px;line-height:14px;color:#595959;font-weight:700;">12.58 K</div>
<div class="r" style="left:591px;top:343.7px;width:13px;height:13px;background:#00a05a;border-radius:50%"></div>
<div class="t" style="left:613.50px;top:344.85px;font-size:14px;line-height:14px;color:#595959;font-weight:700;">Put OI at 03:30 PM</div>
<div class="t" style="right:1109.00px;text-align:right;top:344.85px;font-size:14px;line-height:14px;color:#595959;font-weight:700;">23.39 K</div>
<div class="r" style="left:591px;top:376.0px;width:13px;height:13px;background:#d9465b;border-radius:50%"></div>
<div class="t" style="left:613.50px;top:377.15px;font-size:14px;line-height:14px;color:#595959;font-weight:700;">Call OI at 09:15 AM</div>
<div class="t" style="right:1109.00px;text-align:right;top:377.15px;font-size:14px;line-height:14px;color:#595959;font-weight:700;">137</div>
<div class="r" style="left:591px;top:396.8px;width:13px;height:13px;border-radius:50%;background:repeating-linear-gradient(45deg,#d9465b 0,#d9465b 3.2px,#fff 3.2px,#fff 4.8px)"></div>
<div class="t" style="left:613.50px;top:397.95px;font-size:14px;line-height:14px;color:#595959;font-weight:700;">Call OI Change</div>
<div class="t" style="right:1109.00px;text-align:right;top:397.95px;font-size:14px;line-height:14px;color:#595959;font-weight:700;">182</div>
<div class="r" style="left:591px;top:417.7px;width:13px;height:13px;background:#d9465b;border-radius:50%"></div>
<div class="t" style="left:613.50px;top:418.85px;font-size:14px;line-height:14px;color:#595959;font-weight:700;">Call OI at 03:30 PM</div>
<div class="t" style="right:1109.00px;text-align:right;top:418.85px;font-size:14px;line-height:14px;color:#595959;font-weight:700;">319</div>
<div class="r" style="left:591px;top:368px;width:210px;height:1px;background:#e6e6e6"></div>
<div class="r" style="left:591px;top:442px;width:210px;height:1px;background:#e6e6e6"></div>
<div class="t" style="left:591.20px;top:451.15px;font-size:14px;line-height:14px;color:#595959;font-weight:700;">PCR at 25150</div>
<div class="t" style="right:1109.00px;text-align:right;top:451.15px;font-size:14px;line-height:14px;color:#595959;font-weight:700;">73.3</div>
<div class="t" style="left:591.20px;top:472.05px;font-size:14px;line-height:14px;color:#595959;font-weight:700;">PCR Change at 25150</div>
<div class="t" style="right:1109.00px;text-align:right;top:472.05px;font-size:14px;line-height:14px;color:#595959;font-weight:700;">69.1</div>
<div class="r" style="left:591px;top:495px;width:210px;height:1px;background:#e6e6e6"></div>
<div class="r" style="left:303px;top:626px;width:1105px;height:4px;background:repeating-linear-gradient(90deg,#111 0,#111 7.34px,#d4d4d4 7.34px,#d4d4d4 8.84px);background-position:1.3px 0"></div>
<div class="r" style="left:303px;top:626px;width:1105px;height:1px;background:#111"></div>
<div class="r" style="left:303px;top:629px;width:1105px;height:1px;background:#111"></div>
<div class="r" style="left:297px;top:622px;width:12px;height:12px;background:#111;border-radius:50%"></div>
<div class="r" style="left:1402px;top:622px;width:12px;height:12px;background:#111;border-radius:50%"></div>
<div class="r" style="left:279px;top:587px;width:48px;height:24.5px;background:#4a5568;border-radius:3px"></div>
<svg class="r" style="left:297px;top:611px" width="12" height="7" viewBox="0 0 12 7"><path d="M0 0H12L6 6Z" fill="#4a5568"/></svg>
<div class="t" style="left:3.00px;width:600px;text-align:center;top:593.64px;font-size:12px;line-height:12px;color:#fff;font-weight:700;">09:15</div>
<div class="r" style="left:1383.5px;top:587px;width:48px;height:24.5px;background:#4a5568;border-radius:3px"></div>
<svg class="r" style="left:1401.5px;top:611px" width="12" height="7" viewBox="0 0 12 7"><path d="M0 0H12L6 6Z" fill="#4a5568"/></svg>
<div class="t" style="left:1107.50px;width:600px;text-align:center;top:593.64px;font-size:12px;line-height:12px;color:#fff;font-weight:700;">15:30</div>
<div class="r" style="left:303px;top:663px;width:77px;height:30px;border:1px solid #d7dbe7;border-radius:4px;box-sizing:border-box;background:#fff"></div>
<div class="t" style="left:41.50px;width:600px;text-align:center;top:672.07px;font-size:12.2px;line-height:12.2px;color:#222;font-weight:700;">Full day</div>
<div class="r" style="left:388px;top:663px;width:102px;height:30px;border:1px solid #d7dbe7;border-radius:4px;box-sizing:border-box;background:#fff"></div>
<div class="t" style="left:139.40px;width:600px;text-align:center;top:672.07px;font-size:12.2px;line-height:12.2px;color:#222;font-weight:700;">Last 2 hours</div>
<div class="r" style="left:499px;top:663px;width:93px;height:30px;border:1px solid #d7dbe7;border-radius:4px;box-sizing:border-box;background:#fff"></div>
<div class="t" style="left:246.00px;width:600px;text-align:center;top:672.07px;font-size:12.2px;line-height:12.2px;color:#222;font-weight:700;">Last 1 hour</div>
<div class="r" style="left:601px;top:663px;width:99px;height:30px;border:1px solid #d7dbe7;border-radius:4px;box-sizing:border-box;background:#fff"></div>
<div class="t" style="left:350.85px;width:600px;text-align:center;top:672.07px;font-size:12.2px;line-height:12.2px;color:#222;font-weight:700;">Last 30 min</div>
<div class="r" style="left:709px;top:663px;width:96px;height:30px;border:1px solid #d7dbe7;border-radius:4px;box-sizing:border-box;background:#fff"></div>
<div class="t" style="left:457.10px;width:600px;text-align:center;top:672.07px;font-size:12.2px;line-height:12.2px;color:#222;font-weight:700;">Last 15 min</div>
<div class="r" style="left:813px;top:663px;width:90px;height:30px;border:1px solid #d7dbe7;border-radius:4px;box-sizing:border-box;background:#fff"></div>
<div class="t" style="left:558.55px;width:600px;text-align:center;top:672.07px;font-size:12.2px;line-height:12.2px;color:#222;font-weight:700;">Last 5 min</div>
<div class="t" style="right:150.00px;text-align:right;top:614.96px;font-size:10.8px;line-height:10.8px;color:#4a5568;font-weight:700;">Total PE OI</div>
<div class="t" style="right:150.00px;text-align:right;top:634.13px;font-size:15.2px;line-height:15.2px;color:#0f9d58;font-weight:400;">9.2 L</div>
<div class="t" style="right:76.00px;text-align:right;top:614.96px;font-size:10.8px;line-height:10.8px;color:#4a5568;font-weight:700;">Total CE OI</div>
<div class="t" style="right:76.00px;text-align:right;top:634.13px;font-size:15.2px;line-height:15.2px;color:#dc3b52;font-weight:400;">10.77 L</div>
<div class="t" style="right:37.60px;text-align:right;top:614.96px;font-size:10.8px;line-height:10.8px;color:#4a5568;font-weight:700;">PCR</div>
<div class="t" style="right:37.60px;text-align:right;top:634.13px;font-size:15.2px;line-height:15.2px;color:#6366f1;font-weight:400;">0.9</div>
<div class="t" style="right:150.00px;text-align:right;top:677.66px;font-size:10.8px;line-height:10.8px;color:#4a5568;font-weight:700;">CE Change</div>
<div class="t" style="right:150.00px;text-align:right;top:697.03px;font-size:15.2px;line-height:15.2px;color:#0f9d58;font-weight:400;">5.53 L</div>
<div class="t" style="right:76.00px;text-align:right;top:677.66px;font-size:10.8px;line-height:10.8px;color:#4a5568;font-weight:700;">PE Change</div>
<div class="t" style="right:76.00px;text-align:right;top:697.03px;font-size:15.2px;line-height:15.2px;color:#dc3b52;font-weight:400;">2.98 L</div>
<div class="t" style="right:37.60px;text-align:right;top:677.66px;font-size:10.8px;line-height:10.8px;color:#4a5568;font-weight:700;">PCR</div>
<div class="t" style="right:37.60px;text-align:right;top:697.03px;font-size:15.2px;line-height:15.2px;color:#6366f1;font-weight:400;">0.5</div>
<div class="r" style="left:271px;top:767px;width:1618px;height:1px;background:#e2e2e2"></div>
</body></html>
